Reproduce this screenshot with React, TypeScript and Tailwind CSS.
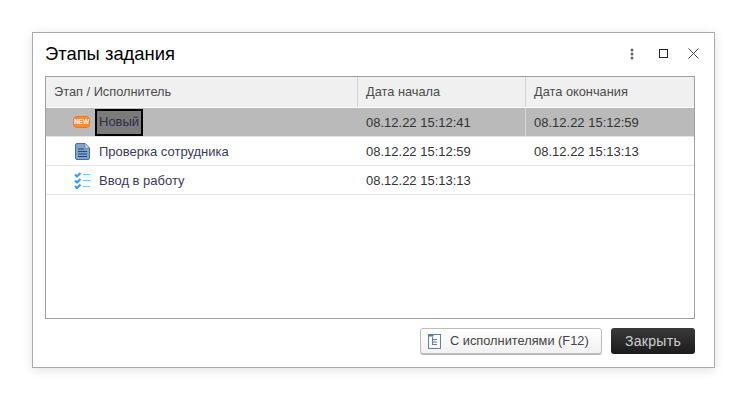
const font = "font-['Liberation_Sans',Arial,sans-serif]";

function NewIcon() {
  return (
    <svg width="17" height="12" viewBox="0 0 17 12">
      <rect x="0.5" y="0.5" width="16" height="11" rx="3.5" fill="#f88d3e" stroke="#e57a2c" />
      <text x="8.5" y="8.2" textAnchor="middle" fontSize="6.5" fontWeight="700" fill="#fff" fontFamily="Liberation Sans">
        NEW
      </text>
    </svg>
  );
}

function DocIcon() {
  return (
    <svg width="15" height="17" viewBox="0 0 15 17">
      <path d="M2 0.500H10L14.500 5V15a1.500 1.500 0 0 1-1.500 1.500H2A1.500 1.500 0 0 1 0.500 15V2A1.500 1.500 0 0 1 2 0.500Z" fill="#7ea4cc" stroke="#4a6f9a" />
      <path d="M10 0.500V5H14.500Z" fill="#dbe7f3" stroke="#4a6f9a" strokeWidth="0.600" />
      <path d="M3 6H9M3 8.500H12M3 11H12M3 13.500H12" stroke="#26476f" strokeWidth="1" />
    </svg>
  );
}

function CheckListIcon() {
  return (
    <svg width="16" height="17" viewBox="0 0 16 17" fill="none">
      <path d="M1 2.500l2 2 3.500-3.500M1 8.500l2 2 3.500-3.500M1 14l2 2 3.500-3.500" stroke="#3a9df0" strokeWidth="2.200" />
      <path d="M9 2.500h7M9 8.500h7M9 14.500h7" stroke="#7cc4f7" strokeWidth="1.200" />
    </svg>
  );
}

function TreeIcon() {
  return (
    <svg width="13" height="15" viewBox="0 0 13 15" fill="none">
      <rect x="0.5" y="0.5" width="12" height="14" stroke="#6d7f8c" />
      <rect x="0.5" y="0.5" width="5" height="2" fill="#2d86c6" />
      <path d="M4.500 5.500h4.500M4.500 8h4.500M4.500 10.500h4.500M4.500 3v8" stroke="#6d7f8c" />
    </svg>
  );
}

const rows = [
  { icon: <NewIcon />, name: "Новый", start: "08.12.22 15:12:41", end: "08.12.22 15:12:59", active: true },
  { icon: <DocIcon />, name: "Проверка сотрудника", start: "08.12.22 15:12:59", end: "08.12.22 15:13:13", active: false },
  { icon: <CheckListIcon />, name: "Ввод в работу", start: "08.12.22 15:13:13", end: "", active: false },
];

export default function App() {
  return (
    <div className={`${font} h-[400px] w-[747px] bg-white pl-[32px] pt-[32px]`}>
      <div className="flex h-[336px] w-[683px] flex-col border border-[#aaaaaa] bg-white pl-[12px] pr-[19px] shadow-[0_2px_10px_rgba(0,0,0,0.12)]">
        <div className="flex h-[43px] shrink-0 items-center justify-between pb-[2px]">
          <h1 className="pt-[2px] text-[18.4px] leading-none text-black">Этапы задания</h1>
          <div className="mr-[-4px] flex items-center">
            <svg width="4" height="12" viewBox="0 0 4 12" fill="#666666">
              <circle cx="2" cy="2" r="1.500" />
              <circle cx="2" cy="6" r="1.500" />
              <circle cx="2" cy="10" r="1.500" />
            </svg>
            <div className="ml-[25px] h-[9px] w-[9px] border border-[#222222]" />
            <svg className="ml-[20px]" width="11" height="11" viewBox="0 0 11 11" stroke="#444444" fill="none">
              <path d="M0.500 0.500l10 10M10.500 0.500l-10 10" />
            </svg>
          </div>
        </div>

        <div className="flex h-[243px] w-[650px] flex-col border border-[#a0a0a0] text-[13px] text-[#3b3b5a]">
          <div className="flex h-[30px] shrink-0 items-center bg-[#f0f0f0] text-[12.8px] text-[#4b4b4b]">
            <div className="flex h-full w-[312px] items-center border-r border-[#d4d4d4] pl-[8px]">Этап / Исполнитель</div>
            <div className="flex h-full w-[168px] items-center border-r border-[#d4d4d4] pl-[8px]">Дата начала</div>
            <div className="pl-[8px]">Дата окончания</div>
          </div>
          {rows.map((r) => (
            <div
              key={r.name}
              className={`flex h-[29px] shrink-0 items-center border-b border-[#e4e4e4] ${r.active ? "mt-[1px] bg-[#bababa]" : "bg-white"}`}
            >
              <div className="flex h-full w-[312px] items-center">
                <div className="flex w-[49px] justify-end pr-[5px]">{r.icon}</div>
                {r.active ? (
                  <span className="flex h-[27px] w-[48px] items-center border-2 border-black bg-[#7b7b7b] pl-[2px] text-[#2d2d48]">
                    {r.name}
                  </span>
                ) : (
                  <span className="pl-[4px] pt-[1px]">{r.name}</span>
                )}
              </div>
              <div className={`flex h-full w-[168px] items-center pl-[8px] pt-[1px] text-[#333333] ${r.active ? "border-r border-[#d4d4d4]" : ""}`}>{r.start}</div>
              <div className="pl-[8px] pt-[1px] text-[#333333]">{r.end}</div>
            </div>
          ))}
        </div>

        <div className="mt-[9px] flex w-[650px] justify-end gap-[9px]">
          <button className="flex h-[26px] w-[182px] items-center rounded-[3px] border border-[#bcbcbc] bg-gradient-to-b from-white to-[#f1f1f1] pl-[7px] text-[12.8px] text-[#444444] shadow-[0_1px_0_#b5b5b5]">
            <TreeIcon />
            <span className="ml-[9px]">С исполнителями (F12)</span>
          </button>
          <button className="h-[26px] w-[84px] rounded-[3px] bg-gradient-to-b from-[#3a3a3a] to-[#1c1c1c] text-[14px] tracking-[0.3px] text-[#d0d0d0]">
            Закрыть
          </button>
        </div>
      </div>
    </div>
  );
}
